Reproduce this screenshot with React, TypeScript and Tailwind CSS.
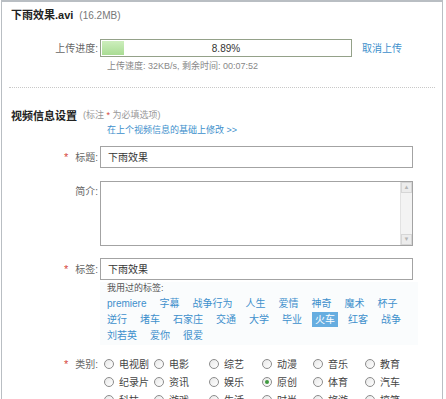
import React from 'react';

const tagRows: string[][] = [
  ['premiere', '字幕', '战争行为', '人生', '爱情', '神奇', '魔术', '杯子'],
  ['逆行', '堵车', '石家庄', '交通', '大学', '毕业', '火车', '红客', '战争'],
  ['刘若英', '爱你', '很爱'],
];

const categories: { name: string; checked?: boolean }[] = [
  { name: '电视剧' }, { name: '电影' }, { name: '综艺' }, { name: '动漫' }, { name: '音乐' }, { name: '教育' },
  { name: '纪录片' }, { name: '资讯' }, { name: '娱乐' }, { name: '原创', checked: true }, { name: '体育' }, { name: '汽车' },
  { name: '科技' }, { name: '游戏' }, { name: '生活' }, { name: '时尚' }, { name: '旅游' }, { name: '搞笑' },
];

function Label({ text, required, className = '' }: { text: string; required?: boolean; className?: string }) {
  return (
    <div className={`w-[89px] shrink-0 flex justify-end items-center text-[#666] ${className}`}>
      {required && <span className="text-[#d6453d] mr-[7px] text-[11px]">*</span>}
      <span>{text}</span>
    </div>
  );
}

function Radio({ checked }: { checked?: boolean }) {
  return (
    <span className="w-[10px] h-[10px] rounded-full border border-[#8c8c8c] bg-gradient-to-br from-[#e8e8e8] to-white flex items-center justify-center shrink-0">
      {checked && <span className="w-[4px] h-[4px] rounded-full bg-[#3f9a3f]" />}
    </span>
  );
}

export default function App() {
  return (
    <div className="w-[446px] h-[399px] overflow-hidden bg-white font-['Liberation_Sans','Noto_Sans_CJK_SC',sans-serif] text-[10px] text-[#333]">
      <div className="ml-px w-[442px] h-[399px] border-t-2 border-x border-[#b9bec3] px-[7px]">
        {/* file title */}
        <div className="h-[26px] flex items-center pl-[2px] gap-[6px]">
          <span className="text-[11px] font-bold text-[#222]">下雨效果.avi</span>
          <span className="text-[#777]">(16.2MB)</span>
        </div>

        {/* progress */}
        <div className="mt-[11px] h-[18px] flex items-center">
          <Label text="上传进度:" />
          <div className="ml-[2px] w-[252px] h-[18px] border border-[#94a189] p-px relative">
            <div className="w-[22px] h-full bg-gradient-to-b from-[#cdeebd] to-[#a9dc93]" />
            <span className="absolute inset-0 flex items-center justify-center text-[#333]">8.89%</span>
          </div>
          <a className="ml-[10px] text-[#3d8fcc]">取消上传</a>
        </div>
        <div className="mt-[2px] h-[16px] flex items-center pl-[98px] text-[9px] text-[#888]">
          上传速度: 32KB/s, 剩余时间: 00:07:52
        </div>

        <div className="mt-[12px] border-t border-dotted border-[#c8c8c8]" />

        {/* section */}
        <div className="mt-[20px] h-[16px] flex items-center pl-[2px] gap-[6px]">
          <span className="text-[11px] font-bold text-[#222]">视频信息设置</span>
          <span className="text-[9px] text-[#999]">
            (标注 <span className="text-[#d6453d]">*</span> 为必填选项)
          </span>
        </div>
        <div className="h-[14px] flex items-center pl-[98px] text-[9px] text-[#3d8fcc]">在上个视频信息的基础上修改 &gt;&gt;</div>

        {/* title */}
        <div className="mt-[8px] flex items-center">
          <Label text="标题:" required />
          <div className="ml-[2px] w-[313px] h-[22px] border border-[#a3a3a3] flex items-center px-[7px] text-[#333]">下雨效果</div>
        </div>

        {/* intro */}
        <div className="mt-[13px] flex items-start">
          <Label text="简介:" className="pt-[3px]" />
          <div className="ml-[2px] w-[313px] h-[65px] border border-[#a3a3a3] flex">
            <div className="flex-1" />
            <div className="w-[12px] bg-[#f3f3f3] border-l border-[#e2e2e2] flex flex-col justify-between">
              <div className="h-[11px] border border-[#d6d6d6] bg-[#ececec] flex items-center justify-center text-[6px] text-[#b5b5b5]">▲</div>
              <div className="h-[11px] border border-[#d6d6d6] bg-[#ececec] flex items-center justify-center text-[6px] text-[#b5b5b5]">▼</div>
            </div>
          </div>
        </div>

        {/* tags */}
        <div className="mt-[12px] flex items-center">
          <Label text="标签:" required />
          <div className="ml-[2px] w-[313px] h-[22px] border border-[#a3a3a3] flex items-center px-[7px] text-[#333]">下雨效果</div>
        </div>
        <div className="ml-[91px] w-[318px] bg-[#fafcfd] pb-[2px]">
          <div className="mt-[2px] h-[13px] flex items-center pl-[7px] text-[9px] text-[#555]">我用过的标签:</div>
          {tagRows.map((row, i) => (
            <div key={i} className="h-[16px] flex items-center gap-x-[7px] pl-[4px]">
              {row.map((t) => (
                <span
                  key={t}
                  className={`px-[3px] leading-[15px] ${t === '火车' ? 'bg-[#66ade0] text-white' : 'text-[#3d8fcc]'}`}
                >
                  {t}
                </span>
              ))}
            </div>
          ))}
        </div>

        {/* category */}
        <div className="mt-[10px] flex items-start">
          <Label text="类别:" required className="h-[18px]" />
          <div className="ml-[6px] grid grid-cols-[50px_55px_53px_51px_52px_52px]">
            {categories.map((c) => (
              <div key={c.name} className="h-[18px] flex items-center gap-[5px] text-[#444]">
                <Radio checked={c.checked} />
                <span>{c.name}</span>
              </div>
            ))}
          </div>
        </div>
      </div>
    </div>
  );
}
